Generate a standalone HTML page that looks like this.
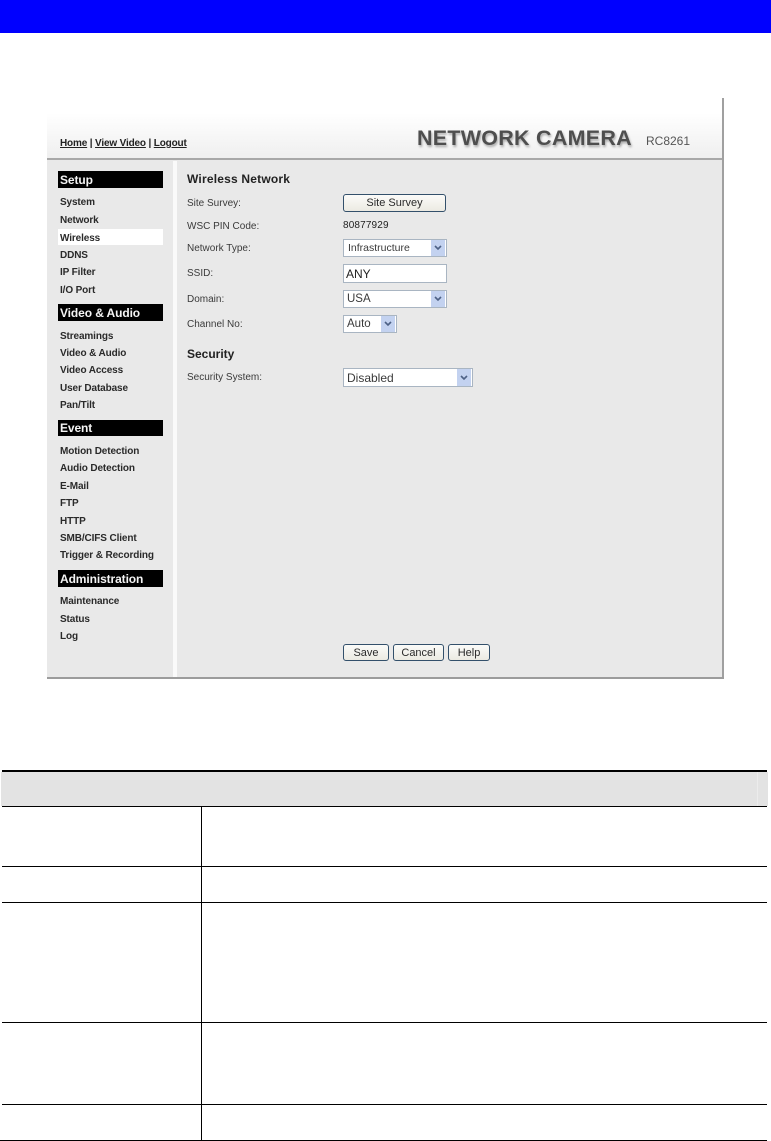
<!DOCTYPE html>
<html lang="en"><head><meta charset="utf-8"><title>Wireless Network</title>
<style>
html,body{margin:0;padding:0;background:#fff}
body{width:771px;height:1141px;position:relative;overflow:hidden;font-family:"Liberation Sans",Arial,sans-serif}
.a{position:absolute;box-sizing:border-box}
.t{position:absolute;white-space:nowrap;line-height:14px;height:14px;filter:blur(.25px)}
.l{left:187px;font-size:10px;color:#3a3a3a;letter-spacing:0}
.m{left:60px;font-size:10px;font-weight:bold;color:#2a2a2a;letter-spacing:-.12px}
.b{left:58px;width:105px;background:#000}
.h{left:60px;color:#f4f4f4;font-size:12px;font-weight:bold;letter-spacing:-.1px}
.s{position:absolute;box-sizing:border-box;background:#fff;border:1px solid #a9b5c2;font-size:11.5px;color:#3a3a3a;padding-left:3px;white-space:nowrap}
.ar{position:absolute;right:1px;top:0;bottom:0;width:14px;background:#c3d2f0}
.ar svg{position:absolute;left:3px;top:50%;margin-top:-3px}
.btn{position:absolute;box-sizing:border-box;border:1px solid #33506b;border-radius:3px;background:linear-gradient(#fbfbf9,#eceae2);font-size:11px;color:#2a2a2a;text-align:center}
.ln{position:absolute;background:#000}
</style></head><body>
<div class="a" style="left:0;top:0;width:771px;height:33px;background:#00f"></div>

<div class="a" style="left:47px;top:98px;width:677px;height:60px;background:linear-gradient(#fff 0,#fff 25%,#efefef 100%)"></div>
<div class="a" style="left:47px;top:158px;width:675px;height:2px;background:#a8a8a8"></div>
<div class="a" style="left:47px;top:160px;width:675px;height:517px;background:#e9e9e9"></div>
<div class="a" style="left:173px;top:161px;width:4px;height:516px;background:#fafafa"></div>
<div class="a" style="left:722px;top:98px;width:2px;height:581px;background:#a0a0a0"></div>
<div class="a" style="left:47px;top:677px;width:677px;height:2px;background:#9c9c9c"></div>

<div class="t" style="left:60px;top:137px;font-size:10px;color:#222;font-weight:bold;letter-spacing:-.16px"><u>Home</u> | <u>View Video</u> | <u>Logout</u></div>
<div class="t" style="left:417px;top:127px;line-height:22px;height:22px;font-size:21.5px;font-weight:bold;color:#4e4e4e;letter-spacing:.25px;text-shadow:1px 2px 2px #aaa">NETWORK CAMERA</div>
<div class="t" style="left:646px;top:134px;font-size:12px;color:#555">RC8261</div>

<div class="a b" style="top:171px;height:17px"></div><div class="t h" style="top:173px">Setup</div>
<div class="t m" style="top:196px">System</div>
<div class="t m" style="top:214px">Network</div>
<div class="a" style="left:58px;top:229px;width:105px;height:16px;background:#fff"></div>
<div class="t m" style="top:232px">Wireless</div>
<div class="t m" style="top:249px">DDNS</div>
<div class="t m" style="top:266px">IP Filter</div>
<div class="t m" style="top:284px">I/O Port</div>

<div class="a b" style="top:304px;height:17px"></div><div class="t h" style="top:306px">Video &amp; Audio</div>
<div class="t m" style="top:330px">Streamings</div>
<div class="t m" style="top:347px">Video &amp; Audio</div>
<div class="t m" style="top:364px">Video Access</div>
<div class="t m" style="top:382px">User Database</div>
<div class="t m" style="top:399px">Pan/Tilt</div>

<div class="a b" style="top:420px;height:16px"></div><div class="t h" style="top:421px">Event</div>
<div class="t m" style="top:445px">Motion Detection</div>
<div class="t m" style="top:462px">Audio Detection</div>
<div class="t m" style="top:480px">E-Mail</div>
<div class="t m" style="top:497px">FTP</div>
<div class="t m" style="top:515px">HTTP</div>
<div class="t m" style="top:532px">SMB/CIFS Client</div>
<div class="t m" style="top:549px">Trigger &amp; Recording</div>

<div class="a b" style="top:570px;height:17px"></div><div class="t h" style="top:572px">Administration</div>
<div class="t m" style="top:595px">Maintenance</div>
<div class="t m" style="top:613px">Status</div>
<div class="t m" style="top:630px">Log</div>

<div class="t" style="left:187px;top:172px;font-size:12px;font-weight:bold;color:#222;letter-spacing:.2px">Wireless Network</div>
<div class="t l" style="top:197px">Site Survey:</div>
<div class="t l" style="top:220px">WSC PIN Code:</div>
<div class="t l" style="top:242px">Network Type:</div>
<div class="t l" style="top:267px">SSID:</div>
<div class="t l" style="top:293px">Domain:</div>
<div class="t l" style="top:318px">Channel No:</div>
<div class="t" style="left:187px;top:347px;font-size:12px;font-weight:bold;color:#222">Security</div>
<div class="t l" style="top:371px">Security System:</div>

<div class="btn" style="left:343px;top:194px;width:103px;height:18px;line-height:16px">Site Survey</div>
<div class="t" style="left:343px;top:219px;font-size:10px;color:#222;letter-spacing:.15px">80877929</div>

<div class="s" style="left:343px;top:239px;width:104px;height:18px;line-height:17px;font-size:10.5px;padding-left:4px">Infrastructure<span class="ar"><svg width="8" height="6" viewBox="0 0 8 6"><path d="M1 1l3 3 3-3" fill="none" stroke="#4d6185" stroke-width="1.6"/></svg></span></div>
<div class="s" style="left:343px;top:264px;width:104px;height:19px;line-height:19px;font-size:12px;padding-left:2px;color:#222">ANY</div>
<div class="s" style="left:343px;top:290px;width:104px;height:18px;line-height:17px">USA<span class="ar"><svg width="8" height="6" viewBox="0 0 8 6"><path d="M1 1l3 3 3-3" fill="none" stroke="#4d6185" stroke-width="1.6"/></svg></span></div>
<div class="s" style="left:343px;top:315px;width:54px;height:18px;line-height:17px">Auto<span class="ar"><svg width="8" height="6" viewBox="0 0 8 6"><path d="M1 1l3 3 3-3" fill="none" stroke="#4d6185" stroke-width="1.6"/></svg></span></div>
<div class="s" style="left:343px;top:368px;width:130px;height:19px;line-height:18px;font-size:12px">Disabled<span class="ar"><svg width="8" height="6" viewBox="0 0 8 6"><path d="M1 1l3 3 3-3" fill="none" stroke="#4d6185" stroke-width="1.6"/></svg></span></div>

<div class="btn" style="left:343px;top:644px;width:46px;height:17px;line-height:16px">Save</div>
<div class="btn" style="left:393px;top:644px;width:51px;height:17px;line-height:16px">Cancel</div>
<div class="btn" style="left:448px;top:644px;width:42px;height:17px;line-height:16px">Help</div>

<div class="a" style="left:1px;top:772px;width:767px;height:34px;background:#e3e3e3"></div>
<div class="a" style="left:757px;top:772px;width:1px;height:34px;background:#ececec"></div>
<div class="ln" style="left:2px;top:770px;width:765px;height:2px"></div>
<div class="ln" style="left:2px;top:806px;width:765px;height:1px"></div>
<div class="ln" style="left:2px;top:866px;width:765px;height:1px"></div>
<div class="ln" style="left:2px;top:902px;width:765px;height:1px"></div>
<div class="ln" style="left:2px;top:1022px;width:765px;height:1px"></div>
<div class="ln" style="left:2px;top:1104px;width:765px;height:1px"></div>
<div class="ln" style="left:0;top:1140px;width:767px;height:1px"></div>
<div class="ln" style="left:201px;top:807px;width:1px;height:333px"></div>
</body></html>
